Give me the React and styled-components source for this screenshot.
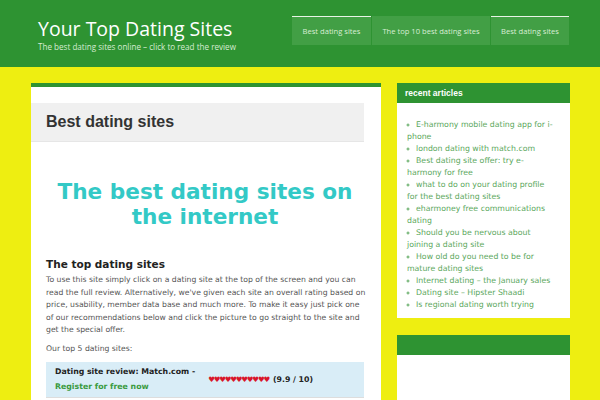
import React from 'react'
import styled, { createGlobalStyle } from 'styled-components'

const Global = createGlobalStyle`
  html, body {
    margin: 0;
    padding: 0;
    background: #eeee11;
    overflow: hidden;
  }
`

const Page = styled.div`
  width: 600px;
  height: 400px;
  background: #eeee11;
  overflow: hidden;
`

const Header = styled.header`
  height: 67px;
  background: #2e9332;
  display: flex;
  justify-content: space-between;
  align-items: flex-start;
  padding: 0 31px 0 38px;
  box-sizing: border-box;
`

const Brand = styled.div`
  padding-top: 17px;
  font-family: "Open Sans", sans-serif;
  color: #fff;
`

const SiteTitle = styled.h1`
  margin: 0;
  font-size: 19.5px;
  font-weight: 400;
  line-height: 24px;
`

const Tagline = styled.p`
  margin: 0;
  font-size: 8.1px;
  line-height: 12px;
  color: #d6ecd3;
`

const Nav = styled.nav`
  display: flex;
  margin-top: 16px;
`

const Tab = styled.a`
  height: 29px;
  box-sizing: border-box;
  display: flex;
  align-items: center;
  justify-content: center;
  width: ${p => p.$w}px;
  margin-left: 1px;
  background: #429f45;
  border-top: 1px solid ${p => (p.$active ? '#e8f4e6' : '#429f45')};
  color: #d9eed5;
  font-family: "Open Sans", sans-serif;
  font-size: 7.6px;
  white-space: nowrap;
`

const Body = styled.div`
  display: flex;
  gap: 16px;
  padding: 16px 0 0 31px;
`

const Main = styled.main`
  width: 350px;
  height: 400px;
  background: #fff;
  border-top: 4px solid #2e9332;
  padding-top: 16px;
  box-sizing: border-box;
`

const TitleBar = styled.div`
  width: 333px;
  height: 39px;
  background: #f0f0f0;
  border-bottom: 1px solid #e6e6e6;
  box-sizing: border-box;
  display: flex;
  align-items: center;
  padding-left: 15px;
  font-family: "Liberation Sans", Arial, sans-serif;
  font-weight: 700;
  font-size: 16px;
  color: #333;
`

const Content = styled.div`
  padding: 0 12px 0 15px;
  font-family: "DejaVu Sans", Verdana, sans-serif;
  color: #555;
`

const BigHeading = styled.h2`
  margin: 37px 5px 0 0;
  text-align: center;
  color: #33c9c6;
  font-size: 21.6px;
  line-height: 25px;
  font-weight: 700;
`

const SubHeading = styled.h3`
  margin: 28px 0 3px;
  font-size: 10.5px;
  line-height: 14px;
  color: #222;
  font-weight: 700;
`

const Para = styled.p`
  margin: 0 0 6px;
  font-size: 7.7px;
  line-height: 12.5px;
`

const Table = styled.table`
  width: 318px;
  border-collapse: collapse;
  margin-top: 7px;
  font-size: 7.8px;
`

const HeadCell = styled.td`
  background: #d9edf7;
  padding: 2px ${p => p.$padR ?? 9}px 3px 9px;
  color: #222;
  font-weight: 700;
  line-height: 15px;
  vertical-align: middle;
  white-space: nowrap;
  width: ${p => p.$w || 'auto'};
`

const Green = styled.span`
  color: #3a9a3e;
`

const Hearts = styled.span`
  color: #d9162a;
  font-size: 7.5px;
  letter-spacing: -1.2px;
  margin-right: 4px;
`

const Cell = styled.td`
  padding: 4px 9px;
  border-top: 1px solid #ddd;
  line-height: 13px;
`

const Side = styled.aside`
  width: 173px;
  display: flex;
  flex-direction: column;
  gap: 17px;
`

const Widget = styled.section`
  background: #fff;
  min-height: ${p => p.$min || 0}px;
`

const WidgetTitle = styled.div`
  height: 20px;
  background: #2e9332;
  color: #fff;
  font-family: "Liberation Sans", Arial, sans-serif;
  font-weight: 700;
  font-size: 8.5px;
  display: flex;
  align-items: center;
  padding-left: 8px;
`

const List = styled.ul`
  margin: 0;
  padding: 16px 14px 7px 10px;
  list-style: circle inside;
  font-family: "DejaVu Sans", sans-serif;
  font-size: 7.8px;
  line-height: 12px;
  color: #5aa75c;
  li::marker {
    font-size: 6px;
  }
`

const articles = [
  'E-harmony mobile dating app for i-\u200bphone',
  'london dating with match.com',
  'Best dating site offer: try e-harmony for free',
  'what to do on your dating profile for the best dating sites',
  'eharmoney free communications dating',
  'Should you be nervous about joining a dating site',
  'How old do you need to be for mature dating sites',
  'Internet dating – the January sales',
  'Dating site – Hipster Shaadi',
  'Is regional dating worth trying',
]

export default function App() {
  return (
    <Page>
      <Global />
      <Header>
        <Brand>
          <SiteTitle>Your Top Dating Sites</SiteTitle>
          <Tagline>The best dating sites online – click to read the review</Tagline>
        </Brand>
        <Nav>
          <Tab $active $w={79}>Best dating sites</Tab>
          <Tab $w={118}>The top 10 best dating sites</Tab>
          <Tab $active $w={78}>Best dating sites</Tab>
        </Nav>
      </Header>
      <Body>
        <Main>
          <TitleBar>Best dating sites</TitleBar>
          <Content>
            <BigHeading>The best dating sites on the internet</BigHeading>
            <SubHeading>The top dating sites</SubHeading>
            <Para>
              To use this site simply click on a dating site at the top of the screen and you can
              read the full review. Alternatively, we've given each site an overall rating based on
              price, usability, member data base and much more. To make it easy just pick one
              of our recommendations below and click the picture to go straight to the site and
              get the special offer.
            </Para>
            <Para>Our top 5 dating sites:</Para>
            <Table>
              <tbody>
                <tr>
                  <HeadCell $w="134px" $padR={4}>
                    Dating site review: Match.com -<br />
                    <Green>Register for free now</Green>
                  </HeadCell>
                  <HeadCell>
                    <Hearts>♥♥♥♥♥♥♥♥♥♥♥</Hearts>(9.9 / 10)
                  </HeadCell>
                </tr>
                <tr>
                  <Cell>We think match.com is the best</Cell>
                  <Cell />
                </tr>
              </tbody>
            </Table>
          </Content>
        </Main>
        <Side>
          <Widget>
            <WidgetTitle>recent articles</WidgetTitle>
            <List>
              {articles.map(a => (
                <li key={a}>{a}</li>
              ))}
            </List>
          </Widget>
          <Widget $min={80}>
            <WidgetTitle />
          </Widget>
        </Side>
      </Body>
    </Page>
  )
}
